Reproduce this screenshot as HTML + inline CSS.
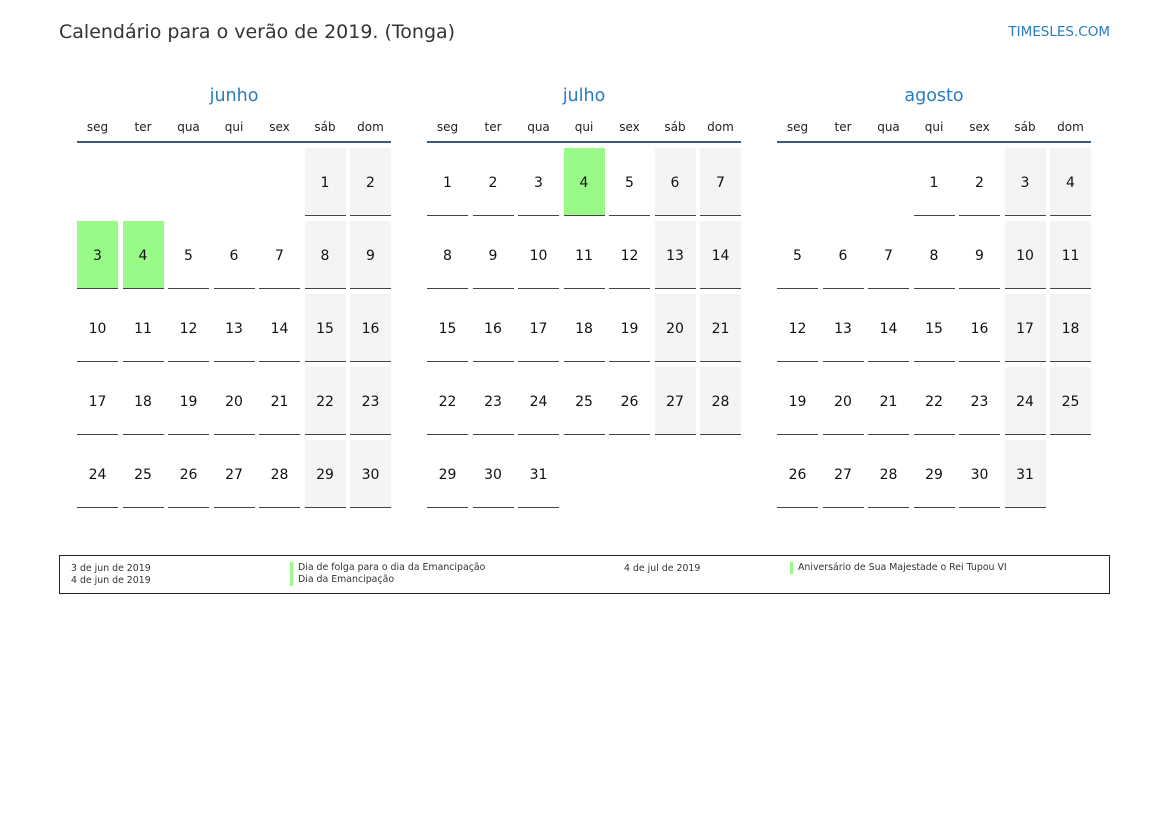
<!DOCTYPE html><html><head><meta charset="utf-8"><style>
body{margin:0;width:1169px;height:827px;background:#fff;font-family:"DejaVu Sans","Liberation Sans",sans-serif;position:relative;overflow:hidden}
.t{position:absolute;left:59px;top:21px;font-size:19px;color:#333}
.logo{position:absolute;right:59px;top:24px;font-size:13.5px;color:#2a7ac0}
.m{position:absolute;top:86px;width:314px}
.mn{text-align:center;font-size:17.5px;color:#2a7ac0;height:24px;line-height:20px}
.dn{display:grid;grid-template-columns:repeat(7,41px);column-gap:4.5px;font-size:12px;color:#222;text-align:center;height:31px;line-height:34px;border-bottom:2px solid #3d5a80}
.g{display:grid;grid-template-columns:repeat(7,41px);column-gap:4.5px;row-gap:5px;margin-top:5px}
.g div{height:67px;line-height:70px;text-align:center;font-size:14px;color:#111;border-bottom:1px solid #444}
.g div.e{border-bottom:none}
.g div.w{background:#f4f4f4}
.g div.h{background:#98fb88}
.lg{position:absolute;left:59px;top:555px;width:1049px;height:37px;border:1px solid #222;font-size:9.4px;color:#333}
.lg span{position:absolute;line-height:12px}
.bar{border-left:3px solid #98fb88;padding-left:5px}
</style></head><body>
<div class="t">Calendário para o verão de 2019. (Tonga)</div>
<div class="logo">TIMESLES.COM</div>

<div class="m" style="left:77px"><div class="mn">junho</div>
<div class="dn"><span>seg</span><span>ter</span><span>qua</span><span>qui</span><span>sex</span><span>sáb</span><span>dom</span></div>
<div class="g">
<div class="e"></div><div class="e"></div><div class="e"></div><div class="e"></div><div class="e"></div><div class="w">1</div><div class="w">2</div>
<div class="h">3</div><div class="h">4</div><div>5</div><div>6</div><div>7</div><div class="w">8</div><div class="w">9</div>
<div>10</div><div>11</div><div>12</div><div>13</div><div>14</div><div class="w">15</div><div class="w">16</div>
<div>17</div><div>18</div><div>19</div><div>20</div><div>21</div><div class="w">22</div><div class="w">23</div>
<div>24</div><div>25</div><div>26</div><div>27</div><div>28</div><div class="w">29</div><div class="w">30</div>
</div></div>

<div class="m" style="left:427px"><div class="mn">julho</div>
<div class="dn"><span>seg</span><span>ter</span><span>qua</span><span>qui</span><span>sex</span><span>sáb</span><span>dom</span></div>
<div class="g">
<div>1</div><div>2</div><div>3</div><div class="h">4</div><div>5</div><div class="w">6</div><div class="w">7</div>
<div>8</div><div>9</div><div>10</div><div>11</div><div>12</div><div class="w">13</div><div class="w">14</div>
<div>15</div><div>16</div><div>17</div><div>18</div><div>19</div><div class="w">20</div><div class="w">21</div>
<div>22</div><div>23</div><div>24</div><div>25</div><div>26</div><div class="w">27</div><div class="w">28</div>
<div>29</div><div>30</div><div>31</div>
</div></div>

<div class="m" style="left:777px"><div class="mn">agosto</div>
<div class="dn"><span>seg</span><span>ter</span><span>qua</span><span>qui</span><span>sex</span><span>sáb</span><span>dom</span></div>
<div class="g">
<div class="e"></div><div class="e"></div><div class="e"></div><div>1</div><div>2</div><div class="w">3</div><div class="w">4</div>
<div>5</div><div>6</div><div>7</div><div>8</div><div>9</div><div class="w">10</div><div class="w">11</div>
<div>12</div><div>13</div><div>14</div><div>15</div><div>16</div><div class="w">17</div><div class="w">18</div>
<div>19</div><div>20</div><div>21</div><div>22</div><div>23</div><div class="w">24</div><div class="w">25</div>
<div>26</div><div>27</div><div>28</div><div>29</div><div>30</div><div class="w">31</div>
</div></div>

<div class="lg">
<span style="left:11px;top:7px">3 de jun de 2019</span>
<span style="left:11px;top:19px">4 de jun de 2019</span>
<span class="bar" style="left:230px;top:6px">Dia de folga para o dia da Emancipação</span>
<span class="bar" style="left:230px;top:18px">Dia da Emancipação</span>
<span style="left:564px;top:7px">4 de jul de 2019</span>
<span class="bar" style="left:730px;top:6px">Aniversário de Sua Majestade o Rei Tupou VI</span>
</div>
</body></html>
